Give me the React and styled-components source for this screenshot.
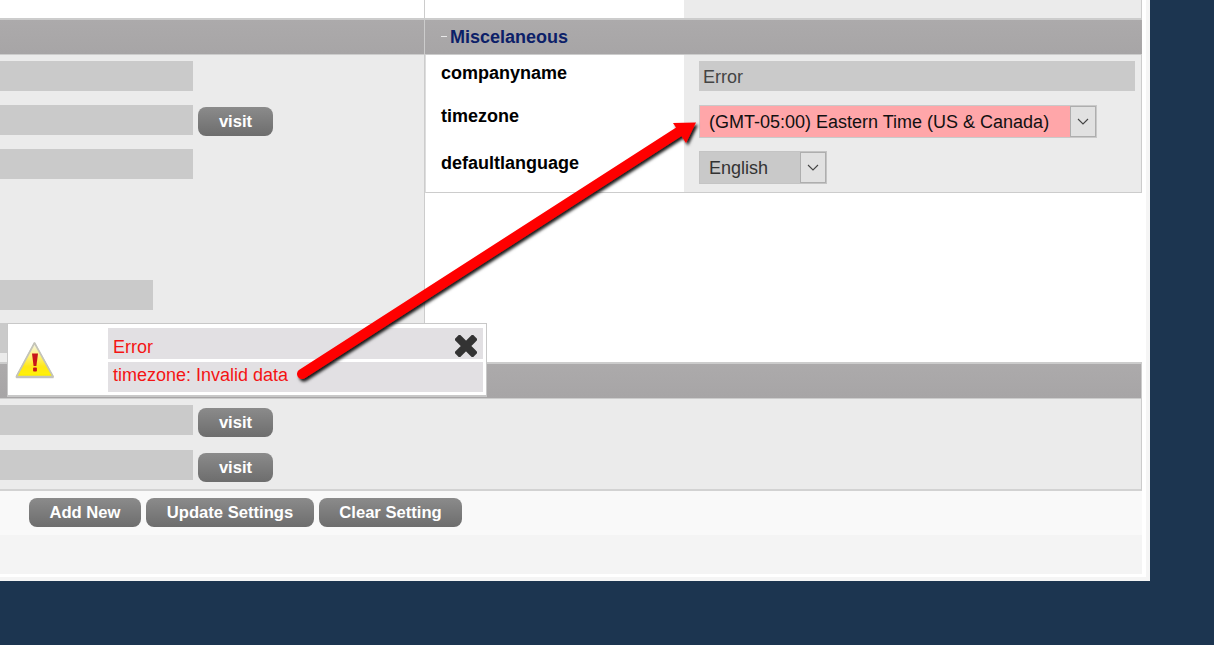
import React from "react";
import styled, { createGlobalStyle } from "styled-components";

const Global = createGlobalStyle`
  html, body { margin: 0; padding: 0; height: 100%; background: #1c3550; overflow: hidden; }
  body { font-family: "Liberation Sans", Arial, sans-serif; }
  * { box-sizing: border-box; }
`;

const Page = styled.div`
  position: relative;
  width: 1150px;
  height: 581px;
  background: #fff;
  border-right: 4px solid #f5f5f5;
  border-bottom: 4px solid #f5f5f5;
`;

const Content = styled.div`
  width: 1142px;
  display: flex;
  flex-direction: column;
`;

const TopStrip = styled.div`
  height: 18px;
  display: grid;
  grid-template-columns: 425px 259px 1fr;
`;

const TopLeft = styled.div`
  background: #fff;
  border-right: 1px solid #ccc;
`;

const TopMiddle = styled.div`
  background: #fff;
`;

const TopRight = styled.div`
  background: #ebebeb;
  border-right: 1px solid #ccc;
`;

const Columns = styled.div`
  height: 344px;
  display: grid;
  grid-template-columns: 425px 717px;
`;

const Header = styled.div`
  height: 37px;
  border-top: 2px solid #ccc;
  border-bottom: 1px solid #ccc;
  background: linear-gradient(#acaaab, #a7a5a6);
  display: flex;
  align-items: center;
  padding-left: ${(p) => p.$indent || 0}px;
  font-size: 18px;
  font-weight: bold;
  color: #0c2068;
`;

const Dash = styled.span`
  width: 6px;
  height: 1px;
  background: #e8e8e8;
  margin-right: 3px;
  margin-top: -2px;
`;

const LeftPanel = styled.div`
  display: flex;
  flex-direction: column;
  background: #ebebeb;
  border-right: 1px solid #ccc;
`;

const LeftBody = styled.div`
  flex: 1;
  display: flex;
  flex-direction: column;
  padding-top: 6px;
`;

const RightPanel = styled.div`
  display: flex;
  flex-direction: column;
`;

const Table = styled.div`
  border-right: 1px solid #ccc;
  border-bottom: 1px solid #ccc;
  border-left: 1px solid #ddd;
  height: 138px;
  display: flex;
  flex-direction: column;
`;

const Row = styled.div`
  height: ${(p) => p.$h}px;
  display: grid;
  grid-template-columns: 258px 1fr;
`;

const Label = styled.div`
  background: #fff;
  padding: ${(p) => p.$top}px 0 0 15px;
  font-size: 18px;
  line-height: 20px;
  font-weight: bold;
  color: #000;
`;

const Value = styled.div`
  background: #ebebeb;
  padding: 6px 6px 0 15px;
`;

const Field = styled.div`
  height: 30px;
  width: ${(p) => p.$w}px;
  flex-shrink: 0;
  background: #cacaca;
`;

const FieldRow = styled.div`
  height: 30px;
  flex-shrink: 0;
  display: flex;
  align-items: flex-start;
  gap: 5px;
  margin-top: ${(p) => p.$mt || 0}px;
`;

const TextField = styled.div`
  height: 30px;
  background: #cacaca;
  padding-left: 4px;
  font-size: 18px;
  line-height: 33px;
  color: #444;
`;

const Select = styled.div`
  display: inline-flex;
  height: 33px;
  width: ${(p) => p.$w}px;
  background: ${(p) => (p.$error ? "#ffa6a9" : "#c9c9c9")};
  border: 1px solid ${(p) => (p.$error ? "#c9c9c9" : "#c4c4c4")};
  align-items: stretch;
`;

const SelectText = styled.span`
  flex: 1;
  padding-left: 9px;
  font-size: 18px;
  line-height: 33px;
  white-space: nowrap;
  color: ${(p) => (p.$error ? "#111" : "#333")};
`;

const SelectArrow = styled.span`
  width: 26px;
  background: #e1e1e1;
  border: 1px solid #aeaeae;
  display: flex;
  align-items: center;
  justify-content: center;
`;

const Button = styled.button`
  width: ${(p) => p.$w}px;
  height: 29px;
  margin: 0;
  margin-top: ${(p) => p.$mt || 0}px;
  padding: 0;
  border: 0;
  border-radius: 8px;
  background: linear-gradient(#8b8b8b, #6d6d6d);
  color: #fff;
  font-family: inherit;
  font-size: 16.6px;
  font-weight: bold;
  line-height: 29px;
  text-align: center;
  white-space: nowrap;
`;

const BottomPanel = styled.div`
  height: 129px;
  display: flex;
  flex-direction: column;
  background: #ebebeb;
  border-right: 1px solid #ccc;
  border-bottom: 2px solid #d2d2d2;
`;

const BottomBody = styled.div`
  flex: 1;
  display: flex;
  flex-direction: column;
  padding-top: 6px;
`;

const ButtonBar = styled.div`
  height: 44px;
  background: #f9f9f9;
  display: flex;
  gap: 5px;
  padding: 7px 0 0 29px;
`;

const FooterFill = styled.div`
  height: 39px;
  background: #f4f4f4;
`;

const Toast = styled.div`
  position: absolute;
  left: 7px;
  top: 323px;
  width: 480px;
  height: 74px;
  background: #fff;
  border: 1px solid #c8c8c8;
  border-bottom-width: 2px;
  padding: 4px 3px 3px 0;
  display: flex;
`;

const ToastIcon = styled.div`
  width: 100px;
  flex-shrink: 0;
  padding: 13px 0 0 7px;
`;

const ToastRows = styled.div`
  flex: 1;
  display: flex;
  flex-direction: column;
  gap: 3px;
`;

const ToastRow = styled.div`
  height: 31px;
  background: #e2e0e3;
  padding: ${(p) => p.$pt || 0}px 6px ${(p) => p.$pb || 0}px 5px;
  display: flex;
  align-items: center;
  justify-content: space-between;
  font-size: 18px;
  color: #f41414;
`;

const CloseSvg = styled.svg`
  margin-top: -2px;
`;

const Overlay = styled.svg`
  position: absolute;
  left: 0;
  top: 0;
  pointer-events: none;
  overflow: visible;
`;

const Chevron = () => (
  <svg width="12" height="7" viewBox="0 0 12 7">
    <polyline points="1,1 6,6 11,1" fill="none" stroke="#444" strokeWidth="1.1" />
  </svg>
);

const CloseIcon = () => (
  <CloseSvg width="22" height="22" viewBox="0 0 22 22">
    <path d="M4.5 4.5 L17.5 17.5 M17.5 4.5 L4.5 17.5" stroke="#333" strokeWidth="7.5" strokeLinecap="square" />
  </CloseSvg>
);

const WarningIcon = () => (
  <svg width="40" height="40" viewBox="0 0 40 40">
    <defs>
      <linearGradient id="warn" x1="0" y1="0" x2="0" y2="1">
        <stop offset="0" stopColor="#f4f4ec" />
        <stop offset="0.4" stopColor="#fff27a" />
        <stop offset="0.7" stopColor="#ffe81a" />
        <stop offset="1" stopColor="#fff200" />
      </linearGradient>
      <filter id="warnSoft" x="-15%" y="-15%" width="130%" height="130%">
        <feDropShadow dx="0" dy="0.6" stdDeviation="0.7" floodColor="#777" floodOpacity="0.7" />
      </filter>
    </defs>
    <path d="M19.5 2 L38 35.5 L1.5 35.5 Z" fill="url(#warn)" stroke="#c4c4b8" strokeWidth="1.6" strokeLinejoin="round" filter="url(#warnSoft)" />
    <path d="M17 12.5 L23 12.5 L21.4 25 L18.6 25 Z" fill="#c8161a" />
    <rect x="18.1" y="26.5" width="3.8" height="4" rx="0.8" fill="#c8161a" />
  </svg>
);

const Arrow = () => (
  <Overlay width="1214" height="645" viewBox="0 0 1214 645">
    <defs>
      <filter id="arrowShadow" x="-5%" y="-5%" width="110%" height="110%">
        <feDropShadow dx="2" dy="2.5" stdDeviation="1.4" floodColor="#000" floodOpacity="0.9" />
      </filter>
    </defs>
    <g filter="url(#arrowShadow)">
      <line x1="302" y1="374" x2="680" y2="131" stroke="#ff0000" strokeWidth="10" strokeLinecap="round" />
      <polygon points="673,123 696,122.5 686,143" fill="#ff0000" />
    </g>
  </Overlay>
);

const Visit = ({ mt }) => (
  <Button $w={75} $mt={mt}>
    visit
  </Button>
);

export default function App() {
  return (
    <>
      <Global />
      <Page>
        <Content>
          <TopStrip>
            <TopLeft />
            <TopMiddle />
            <TopRight />
          </TopStrip>
          <Columns>
            <LeftPanel>
              <Header />
              <LeftBody>
                <FieldRow>
                  <Field $w={193} />
                </FieldRow>
                <FieldRow $mt={14}>
                  <Field $w={193} />
                  <Visit mt={2} />
                </FieldRow>
                <FieldRow $mt={14}>
                  <Field $w={193} />
                </FieldRow>
                <FieldRow $mt={101}>
                  <Field $w={153} />
                </FieldRow>
                <FieldRow $mt={13}>
                  <Field $w={153} />
                </FieldRow>
              </LeftBody>
            </LeftPanel>
            <RightPanel>
              <Header $indent={16}>
                <Dash />
                Miscelaneous
              </Header>
              <Table>
                <Row $h={44}>
                  <Label $top={8}>companyname</Label>
                  <Value>
                    <TextField>Error</TextField>
                  </Value>
                </Row>
                <Row $h={46}>
                  <Label $top={7}>timezone</Label>
                  <Value>
                    <Select $w={398} $error>
                      <SelectText $error>(GMT-05:00) Eastern Time (US &amp; Canada)</SelectText>
                      <SelectArrow>
                        <Chevron />
                      </SelectArrow>
                    </Select>
                  </Value>
                </Row>
                <Row $h={47}>
                  <Label $top={8}>defaultlanguage</Label>
                  <Value>
                    <Select $w={128}>
                      <SelectText>English</SelectText>
                      <SelectArrow>
                        <Chevron />
                      </SelectArrow>
                    </Select>
                  </Value>
                </Row>
              </Table>
            </RightPanel>
          </Columns>
          <BottomPanel>
            <Header />
            <BottomBody>
              <FieldRow>
                <Field $w={193} />
                <Visit mt={3} />
              </FieldRow>
              <FieldRow $mt={15}>
                <Field $w={193} />
                <Visit mt={3} />
              </FieldRow>
            </BottomBody>
          </BottomPanel>
          <ButtonBar>
            <Button $w={112}>Add New</Button>
            <Button $w={168}>Update Settings</Button>
            <Button $w={143}>Clear Setting</Button>
          </ButtonBar>
          <FooterFill />
        </Content>
        <Toast>
          <ToastIcon>
            <WarningIcon />
          </ToastIcon>
          <ToastRows>
            <ToastRow $pt={8}>
              Error
              <CloseIcon />
            </ToastRow>
            <ToastRow $pb={3}>timezone: Invalid data</ToastRow>
          </ToastRows>
        </Toast>
        <Arrow />
      </Page>
    </>
  );
}
